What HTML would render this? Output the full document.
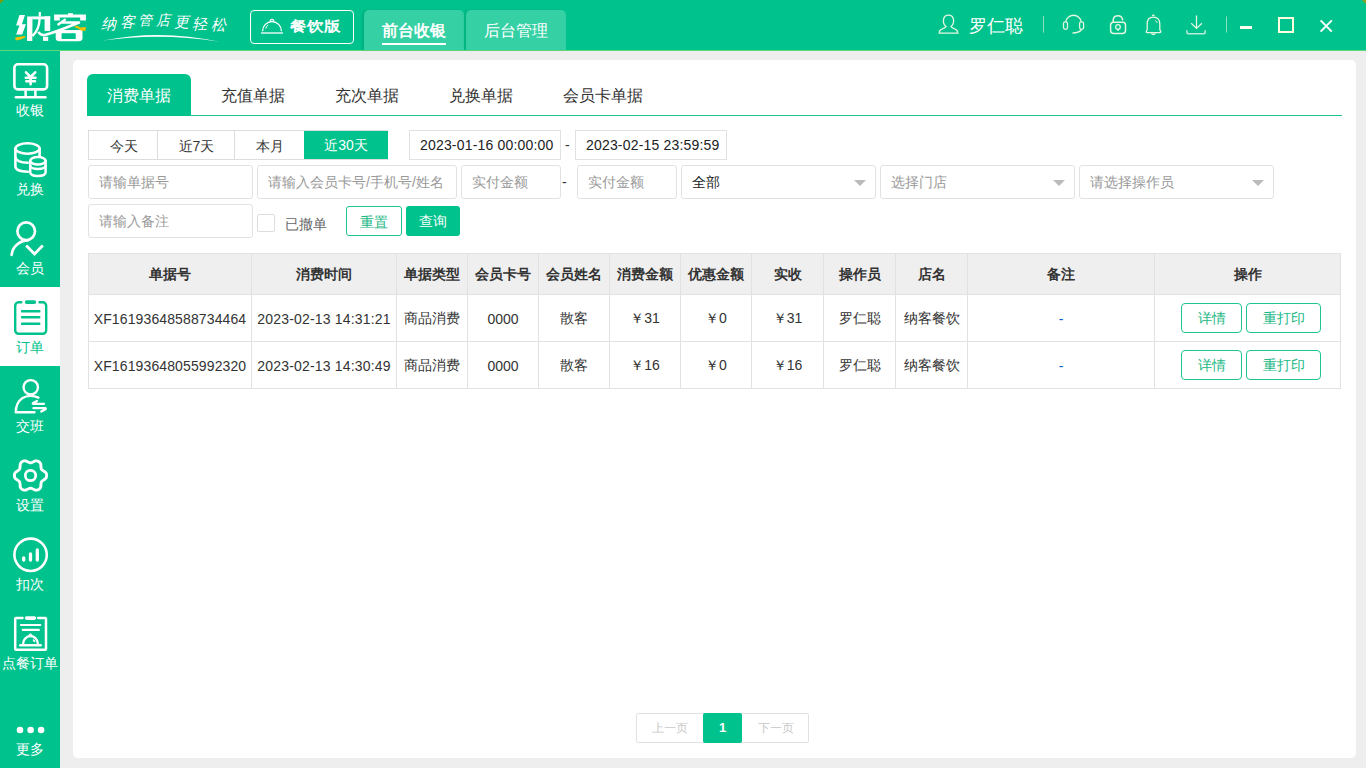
<!DOCTYPE html>
<html><head><meta charset="utf-8">
<style>
*{margin:0;padding:0;box-sizing:border-box}
html,body{width:1366px;height:768px;overflow:hidden;background:#eeeeee;font-family:"Liberation Sans",sans-serif;color:#333}
.a{position:absolute}
.t{position:absolute;white-space:nowrap;line-height:1}
#hdr{left:0;top:0;width:1366px;height:50px;background:#00c28c}
#hline{left:0;top:50px;width:1366px;height:1px;background:#5fd87a}
#side{left:0;top:51px;width:60px;height:717px;background:#00c28c}
#act{left:0;top:287px;width:60px;height:79px;background:#fff}
.sl{position:absolute;left:0;width:60px;text-align:center;font-size:14px;line-height:14px;color:#fff;white-space:nowrap}
.slg{color:#fff;font-style:italic;font-weight:300}
#card{left:73px;top:60px;width:1283px;height:698px;background:#fff;border-radius:5px}
.htab{position:absolute;top:10px;height:40px;width:100px;background:#35d1a4;box-shadow:-2px 0 2px rgba(0,60,40,0.12);border-radius:5px 5px 0 0;color:#fff;font-size:16px;text-align:center;line-height:42px}
.stab{position:absolute;top:74px;height:42px;font-size:16px;color:#333;line-height:44px;text-align:center}
.inp{position:absolute;border:1px solid #e2e2e2;border-radius:3px;background:#fff;font-size:14px;color:#999;line-height:32px;padding-left:10px;white-space:nowrap}
.sel .arr{position:absolute;right:9px;top:14px;width:0;height:0;border-left:6px solid transparent;border-right:6px solid transparent;border-top:6px solid #bbb}
.dbtn{position:absolute;top:130px;height:30px;font-size:14px;color:#333;text-align:center;line-height:30px;border-top:1px solid #ddd;border-bottom:1px solid #ddd}
table{position:absolute;left:88px;top:253px;border-collapse:collapse;table-layout:fixed}
td,th{border:1px solid #e2e2e2;text-align:center;font-size:14px;white-space:nowrap;overflow:hidden}
th{background:#efefef;height:41px;font-weight:bold;color:#333}
td{height:47px;color:#333;padding-top:2px}
td.op{padding-top:0}
th{padding-top:2px}
.obtn{display:inline-block;height:30px;line-height:28px;border:1px solid #1fc493;border-radius:4px;color:#1bb886;font-size:14px;text-align:center;vertical-align:middle}
</style></head><body>
<div id="hdr" class="a"></div>
<div id="hline" class="a"></div>
<div id="side" class="a"></div>
<div id="act" class="a"></div>
<div id="card" class="a"></div>

<!-- header -->
<svg class="a" style="left:0;top:0" width="1366" height="6"><path d="M0 0 H3.8 L0 3.8 Z" fill="#7c9a05"/><path d="M1362 0 H1366 V4 Z" fill="#8aa020"/></svg>
<svg class="a" style="left:0;top:0" width="95" height="50">
 <g fill="#fff">
  <path d="M19.5 15 H25 L21.9 24.2 H26 L22.1 34.5 H16.1 L19.5 25.6 H16.1 Z"/>
  <path d="M27.2 16.4 H32.5 L32.3 40.9 H27 Z"/>
  <path d="M32.3 16.4 H50.2 V19.3 H32.3 Z"/>
  <path d="M38.7 12 H40.9 V16.5 H38.7 Z"/>
  <path d="M44.6 16.4 H50.2 V30.9 H44.6 Z"/>
  <path d="M43 36.8 H48.2 V40.9 H43 Z"/>
  <path d="M54.1 14.5 H85.9 V20.4 H80.2 V17.5 H59.8 V20.4 H54.1 Z"/>
  <path d="M68 13.2 H73 V15 H68 Z"/>
  <path d="M55.7 30 H82.5 V38.3 Q82.5 41.3 78.5 41.3 H59.7 Q55.7 41.3 55.7 38.3 Z M61.6 33.2 V39.1 H75.7 V33.2 Z" fill-rule="evenodd"/>
 </g>
 <g fill="none" stroke="#fff" stroke-linecap="butt" stroke-linejoin="round">
  <path d="M39.6 19 Q39.2 30 32.4 36" stroke-width="2.4"/>
  <path d="M38.2 32 Q41 35.6 45 35 Q56 32 79 22.5 H62" stroke-width="2.6"/>
  <path d="M57.6 25 L65.7 19.1" stroke-width="2.4"/>
 </g>
 <path fill="#f8be00" d="M15.1 37.5 L21.4 36.6 L24.9 36.1 L25.4 37.3 L21.4 39.2 L15.8 40.6 Z"/>
 <path fill="#f8be00" d="M73.8 26.8 L77 25.7 L80.6 27.5 L85.9 27 L85.5 30.7 L81.6 30.7 L77.9 28.6 Z"/>
</svg>
<div class="t slg" style="left:101px;top:16px;font-size:15px">纳</div><div class="t slg" style="left:119.5px;top:13.5px;font-size:15px">客</div><div class="t slg" style="left:138px;top:12.5px;font-size:14px">管</div><div class="t slg" style="left:156px;top:12.5px;font-size:14px">店</div><div class="t slg" style="left:174px;top:13.5px;font-size:15px">更</div><div class="t slg" style="left:192px;top:16px;font-size:15px">轻</div><div class="t slg" style="left:210.5px;top:17px;font-size:15px">松</div>
<svg class="a" style="left:0;top:0" width="1366" height="50">
 <path d="M103 40.6 Q 160 28.6 219.5 41.8 Q 160 32.4 103 40.6 Z" fill="#fff"/>
</svg>
<div class="a" style="left:250px;top:10px;width:104px;height:34px;border:1px solid #fff;border-radius:4px"></div>
<svg class="a" style="left:0;top:0" width="300" height="50" fill="none" stroke="#fff" stroke-width="1.3">
 <path d="M262.6 31.2 A 9.4 9.6 0 0 1 281.4 31.2"/>
 <path d="M270.2 21.8 Q 270.2 19.4 272 19.4 Q 273.8 19.4 273.8 21.8"/>
 <path d="M261 33 H283"/>
 <path d="M265.8 28.6 Q 266.2 26.2 268.2 24.8" stroke-width="1"/>
</svg>
<div class="t" style="left:290px;top:18px;font-size:17px;font-weight:bold;color:#fff;transform:scaleY(0.85);transform-origin:0 0;margin-top:1px">餐饮版</div>
<div class="htab" style="left:364px;font-weight:bold">前台收银</div>
<div class="a" style="left:382px;top:43px;width:64px;height:2px;background:#fff"></div>
<div class="htab" style="left:466px">后台管理</div>

<svg class="a" style="left:0;top:0" width="1366" height="50" fill="none" stroke="#e3f7e0" stroke-width="1.3">
 <!-- user -->
 <path d="M946 26.5 C 942 23 942.5 15.2 948.5 15.2 C 954.5 15.2 955 23 951 26.5 C 951.5 28 954 28.5 955 29 C 957.5 30 957.8 32 957.8 33.2 H939.2 C 939.2 32 939.5 30 942 29 C 943 28.5 945.5 28 946 26.5 Z"/>
 <!-- separator -->
 <path d="M1043.5 16 V32.7" stroke="#8fe0c0" stroke-width="1"/>
 <!-- headset -->
 <path d="M1065.6 22 A 8 8 0 0 1 1081.4 22"/>
 <rect x="1063.5" y="21.8" width="4" height="7.6" rx="1.8"/>
 <rect x="1079.6" y="21.8" width="4" height="7.6" rx="1.8"/>
 <path d="M1081.5 29.5 Q 1079 33 1072.5 33" stroke-width="1.5"/>
 <!-- lock -->
 <path d="M1113.2 22 V19.5 A 4.8 4.8 0 0 1 1122.6 19.5 V20.6" stroke-width="1.5"/>
 <rect x="1110.6" y="22.2" width="14.9" height="11.2" rx="2.8" stroke-width="1.5"/>
 <circle cx="1118" cy="27" r="2.3" stroke-width="1.3"/>
 <path d="M1118 29.3 V31" stroke-width="1.3"/>
 <!-- bell -->
 <path d="M1153.3 17.2 C 1149 17.2 1147.2 20.5 1147.2 24 V29.5 L1146.3 31.5 C1146 32.2 1146.5 32.6 1147.2 32.6 H1159.8 C1160.5 32.6 1161 32.2 1160.7 31.5 L1159.8 29.5 V24 C 1159.8 20.5 1158 17.2 1153.3 17.2 Z"/>
 <path d="M1152 15.8 L1153.3 14.9 L1154.6 15.8" stroke-width="1.2"/>
 <path d="M1151.6 32.8 A1.8 1.8 0 0 0 1155.2 32.8"/>
 <path d="M1155.4 20.4 L1157.4 22.9" stroke-width="1"/>
 <!-- download -->
 <path d="M1196.5 15.5 V28.4 M1191.2 23.3 L1196.5 28.4 L1201.9 23.3" stroke-width="1.3"/>
 <path d="M1186.9 30.3 V32 Q1186.9 33.8 1188.7 33.8 H1203.4 Q1205.2 33.8 1205.2 32 V30.3" stroke="#b9ecd6" stroke-width="1.5"/>
 <!-- separator -->
 <path d="M1226.5 16.4 V32.5" stroke="#8fe0c0" stroke-width="1"/>
</svg>
<div class="t" style="left:969px;top:17px;font-size:18px;color:#fff">罗仁聪</div>
<div class="a" style="left:1240px;top:26px;width:12px;height:3px;background:#fdfdf0"></div>
<div class="a" style="left:1278px;top:17px;width:16px;height:16px;border:2.5px solid #fdfde0"></div>
<svg class="a" style="left:1318px;top:18px" width="16" height="16" viewBox="0 0 16 16"><path d="M2.6 2.4 L13.8 13.6 M13.8 2.4 L2.6 13.6" stroke="#fff" stroke-width="2"/></svg>

<!-- sidebar icons -->
<svg class="a" style="left:0;top:0" width="60" height="768" fill="none" stroke="#fff" stroke-width="2.6" stroke-linecap="round" stroke-linejoin="round">
 <!-- 收银 -->
 <rect x="14.4" y="64.3" width="32.7" height="25.1" rx="3.5"/>
 <path d="M25.6 90.5 V96 M35.4 90.5 V96" stroke-width="2.5" stroke-linecap="butt"/>
 <path d="M15.8 97.2 H45.5" stroke-width="2.4"/>
 <path d="M26 72.3 L30.6 77 L35.2 72.3 M25.8 77.8 H35.4 M26.3 81.2 H35 M30.6 77.2 V84.2" stroke-width="2.6"/>
 <!-- 兑换 -->
 <ellipse cx="27.5" cy="148.5" rx="12.1" ry="5.2" stroke-width="2.6"/>
 <path d="M15.4 148.5 V166.3 Q15.4 171.5 27.8 171.8" stroke-width="2.6"/>
 <path d="M15.4 157.5 Q16.5 162.5 27.8 162.8" stroke-width="2.6"/>
 <path d="M39.6 148.5 V156.5" stroke-width="2.6"/>
 <ellipse cx="37.9" cy="160.8" rx="7.7" ry="3.7" stroke-width="2.5"/>
 <path d="M30.2 160.8 V172.3 Q30.2 176 37.9 176 Q45.6 176 45.6 172.3 V160.8" stroke-width="2.5"/>
 <path d="M30.2 165.8 Q31 169 37.9 169 Q44.8 169 45.6 165.8" stroke-width="2.5"/>
 <!-- 会员 -->
 <circle cx="26.2" cy="231.2" r="8.8" stroke-width="2.7"/>
 <path d="M28 240.3 A 16.5 16.5 0 0 0 11.6 254.8" stroke-width="2.7"/>
 <path d="M26.2 245.5 L34.5 254 L42.8 245.5" stroke-width="2.8" stroke-linecap="butt" stroke-linejoin="miter"/>
 <!-- 交班 -->
 <circle cx="30.75" cy="387.3" r="7.2" stroke-width="2.4"/>
 <path d="M38.4 397.6 C 34 395.4 27 395 22.2 398.3 C 18 401.3 15.8 406 15.8 412.3 H34.5" stroke-width="2.4"/>
 <path d="M37 401 L33 403 Q32.2 403.8 33.6 403.8 H44" stroke-width="2.2"/>
 <path d="M33.4 408.2 H45.5 Q46.3 408.6 45.5 409.2 L41.2 411.5" stroke-width="2.2"/>
 <!-- 设置 -->
 <path d="M46.65 475.50 L46.62 476.06 L46.53 476.62 L46.37 477.17 L46.15 477.70 L45.86 478.21 L45.48 478.68 L44.96 479.11 L44.25 479.44 L43.83 479.83 L43.36 480.18 L42.89 480.51 L42.44 480.82 L42.04 481.13 L41.71 481.46 L41.46 481.82 L41.27 482.23 L41.15 482.68 L41.08 483.18 L41.03 483.73 L40.99 484.30 L40.92 484.88 L40.79 485.44 L40.85 486.22 L40.75 486.88 L40.52 487.45 L40.23 487.95 L39.88 488.41 L39.48 488.82 L39.05 489.18 L38.58 489.49 L38.07 489.74 L37.54 489.94 L36.99 490.08 L36.42 490.15 L35.83 490.15 L35.23 490.07 L34.61 489.83 L33.96 489.38 L33.41 489.21 L32.88 488.98 L32.36 488.73 L31.87 488.50 L31.40 488.31 L30.94 488.19 L30.50 488.15 L30.06 488.19 L29.60 488.31 L29.13 488.50 L28.64 488.73 L28.12 488.98 L27.59 489.21 L27.04 489.38 L26.39 489.83 L25.77 490.07 L25.17 490.15 L24.58 490.15 L24.01 490.08 L23.46 489.94 L22.93 489.74 L22.43 489.49 L21.95 489.18 L21.52 488.82 L21.12 488.41 L20.77 487.95 L20.48 487.45 L20.25 486.88 L20.15 486.22 L20.21 485.44 L20.08 484.88 L20.01 484.30 L19.97 483.73 L19.92 483.18 L19.85 482.68 L19.73 482.23 L19.54 481.82 L19.29 481.46 L18.96 481.13 L18.56 480.82 L18.11 480.51 L17.64 480.18 L17.17 479.83 L16.75 479.44 L16.04 479.11 L15.52 478.68 L15.14 478.21 L14.85 477.70 L14.63 477.17 L14.47 476.62 L14.38 476.06 L14.35 475.50 L14.38 474.94 L14.47 474.38 L14.63 473.83 L14.85 473.30 L15.14 472.79 L15.52 472.32 L16.04 471.89 L16.75 471.56 L17.17 471.17 L17.64 470.82 L18.11 470.49 L18.56 470.18 L18.96 469.87 L19.29 469.54 L19.54 469.18 L19.73 468.77 L19.85 468.32 L19.92 467.82 L19.97 467.27 L20.01 466.70 L20.08 466.12 L20.21 465.56 L20.15 464.78 L20.25 464.12 L20.48 463.55 L20.77 463.05 L21.12 462.59 L21.52 462.18 L21.95 461.82 L22.42 461.51 L22.93 461.26 L23.46 461.06 L24.01 460.92 L24.58 460.85 L25.17 460.85 L25.77 460.93 L26.39 461.17 L27.04 461.62 L27.59 461.79 L28.12 462.02 L28.64 462.27 L29.13 462.50 L29.60 462.69 L30.06 462.81 L30.50 462.85 L30.94 462.81 L31.40 462.69 L31.87 462.50 L32.36 462.27 L32.88 462.02 L33.41 461.79 L33.96 461.62 L34.61 461.17 L35.23 460.93 L35.83 460.85 L36.42 460.85 L36.99 460.92 L37.54 461.06 L38.07 461.26 L38.58 461.51 L39.05 461.82 L39.48 462.18 L39.88 462.59 L40.23 463.05 L40.52 463.55 L40.75 464.12 L40.85 464.78 L40.79 465.56 L40.92 466.12 L40.99 466.70 L41.03 467.27 L41.08 467.82 L41.15 468.32 L41.27 468.77 L41.46 469.18 L41.71 469.54 L42.04 469.87 L42.44 470.18 L42.89 470.49 L43.36 470.82 L43.83 471.17 L44.25 471.56 L44.96 471.89 L45.48 472.32 L45.86 472.79 L46.15 473.30 L46.37 473.83 L46.53 474.38 L46.62 474.94Z" stroke-width="2.9"/>
 <circle cx="30.5" cy="475.5" r="5.2" stroke-width="2.7"/>
 <!-- 扣次 -->
 <circle cx="30.6" cy="554.8" r="16.2" stroke-width="2.6"/>
 <path d="M23.7 557.8 V560 M30.5 554 V560 M37.3 550 V560" stroke-width="3.3"/>
 <!-- 点餐订单 -->
 <path d="M22.5 618 H16 Q15.2 618 15.2 618.8 V649 Q15.2 649.8 16 649.8 H45.2 Q46 649.8 46 649 V618.8 Q46 618 45.2 618 H38.2" stroke-width="2.5"/>
 <path d="M26.6 618.1 H34.4" stroke-width="3.6"/>
 <path d="M21 625 H40.3 M22.8 629.9 H38.8" stroke-width="2.2"/>
 <path d="M23.2 643.5 A 7.3 7.3 0 0 1 37.8 643.5" stroke-width="2.3"/>
 <path d="M20.3 645.3 H40.7" stroke-width="2.4"/>
 <path d="M29.3 635.7 L30.5 634.3 L31.7 635.7" stroke-width="1.8"/>
 <path d="M33.5 640 L34.6 641.4" stroke-width="1.6"/>
 <!-- 更多 -->
 <circle cx="20" cy="730" r="3.3" fill="#fff" stroke="none"/>
 <circle cx="30.6" cy="730" r="3.3" fill="#fff" stroke="none"/>
 <circle cx="41.1" cy="730" r="3.3" fill="#fff" stroke="none"/>
</svg>
<svg class="a" style="left:0;top:0" width="60" height="768" fill="none" stroke="#00c28c" stroke-linecap="round" stroke-linejoin="round">
 <path d="M21.3 302.3 H18.5 A3.4 3.4 0 0 0 15.2 305.7 V330.5 A3.4 3.4 0 0 0 18.6 333.8 H42.8 A3.4 3.4 0 0 0 46.2 330.5 V305.7 A3.4 3.4 0 0 0 42.8 302.3 H39.5" stroke-width="2.4"/>
 <path d="M26.7 302.1 H34.3" stroke-width="3.7"/>
 <path d="M22 311.2 H39.3 M22 317.2 H39.3 M22 323.8 H39.3" stroke-width="2.4"/>
</svg>
<div class="sl" style="top:103px">收银</div>
<div class="sl" style="top:182px">兑换</div>
<div class="sl" style="top:261px">会员</div>
<div class="sl" style="top:340px;color:#00c28c">订单</div>
<div class="sl" style="top:419px">交班</div>
<div class="sl" style="top:498px">设置</div>
<div class="sl" style="top:577px">扣次</div>
<div class="sl" style="top:656px">点餐订单</div>
<div class="sl" style="top:742px">更多</div>

<!-- sub tabs -->
<div class="a" style="left:87px;top:115px;width:1255px;height:1px;background:#1fc493"></div>
<div class="a" style="left:87px;top:74px;width:104px;height:42px;background:#00c28c;border-radius:6px 6px 0 0"></div>
<div class="stab" style="left:87px;width:104px;color:#fff">消费单据</div>
<div class="stab" style="left:205px;width:96px">充值单据</div>
<div class="stab" style="left:319px;width:96px">充次单据</div>
<div class="stab" style="left:433px;width:96px">兑换单据</div>
<div class="stab" style="left:555px;width:96px">会员卡单据</div>

<!-- date row -->
<div class="a" style="left:88px;top:130px;width:300px;height:30px;border:1px solid #ddd;border-right:none"></div>
<div class="dbtn" style="left:88px;width:70px;border-left:1px solid #ddd">今天</div>
<div class="dbtn" style="left:157px;width:78px;border-left:1px solid #ddd">近7天</div>
<div class="dbtn" style="left:234px;width:70px;border-left:1px solid #ddd">本月</div>
<div class="dbtn" style="left:304px;top:131px;height:28px;width:84px;background:#00c28c;color:#fff;border:none;line-height:28px">近30天</div>
<div class="inp" style="left:409px;top:130px;width:152px;height:30px;color:#222;line-height:28px;padding-left:10px;letter-spacing:0.18px;border-radius:0">2023-01-16 00:00:00</div>
<div class="t" style="left:565px;top:138px;font-size:14px;color:#333">-</div>
<div class="inp" style="left:575px;top:130px;width:152px;height:30px;color:#222;line-height:28px;padding-left:10px;letter-spacing:0.18px;border-radius:0">2023-02-15 23:59:59</div>

<!-- filter row -->
<div class="inp" style="left:88px;top:165px;width:165px;height:34px">请输单据号</div>
<div class="inp" style="left:257px;top:165px;width:200px;height:34px">请输入会员卡号/手机号/姓名</div>
<div class="inp" style="left:461px;top:165px;width:100px;height:34px">实付金额</div>
<div class="t" style="left:562px;top:175px;font-size:14px;color:#333">-</div>
<div class="inp" style="left:577px;top:165px;width:100px;height:34px">实付金额</div>
<div class="inp sel" style="left:681px;top:165px;width:195px;height:34px;color:#222">全部<span class="arr"></span></div>
<div class="inp sel" style="left:880px;top:165px;width:195px;height:34px">选择门店<span class="arr"></span></div>
<div class="inp sel" style="left:1079px;top:165px;width:195px;height:34px">请选择操作员<span class="arr"></span></div>

<!-- row 3 -->
<div class="inp" style="left:88px;top:204px;width:165px;height:34px">请输入备注</div>
<div class="a" style="left:257px;top:214px;width:18px;height:18px;border:1px solid #ddd;border-radius:2px"></div>
<div class="t" style="left:285px;top:217px;font-size:14px;color:#666">已撤单</div>
<div class="a" style="left:346px;top:206px;width:56px;height:30px;border:1px solid #1fc493;border-radius:3px;color:#1bb886;font-size:14px;text-align:center;line-height:30px">重置</div>
<div class="a" style="left:406px;top:206px;width:54px;height:30px;background:#00c28c;border-radius:3px;color:#fff;font-size:14px;text-align:center;line-height:30px">查询</div>

<!-- table -->
<table>
<colgroup><col style="width:163px"><col style="width:145px"><col style="width:71px"><col style="width:71px"><col style="width:71px"><col style="width:71px"><col style="width:71px"><col style="width:72px"><col style="width:72px"><col style="width:72px"><col style="width:187px"><col style="width:186px"></colgroup>
<tr><th>单据号</th><th>消费时间</th><th>单据类型</th><th>会员卡号</th><th>会员姓名</th><th>消费金额</th><th>优惠金额</th><th>实收</th><th>操作员</th><th>店名</th><th>备注</th><th>操作</th></tr>
<tr><td style="letter-spacing:0.12px">XF16193648588734464</td><td style="letter-spacing:0.18px">2023-02-13 14:31:21</td><td>商品消费</td><td>0000</td><td>散客</td><td>￥31</td><td>￥0</td><td>￥31</td><td>罗仁聪</td><td>纳客餐饮</td><td style="color:#0d62d2">-</td><td class="op"><span class="obtn" style="width:61px;margin-left:7px">详情</span><span class="obtn" style="width:75px;margin-left:4px">重打印</span></td></tr>
<tr><td style="letter-spacing:0.12px">XF16193648055992320</td><td style="letter-spacing:0.18px">2023-02-13 14:30:49</td><td>商品消费</td><td>0000</td><td>散客</td><td>￥16</td><td>￥0</td><td>￥16</td><td>罗仁聪</td><td>纳客餐饮</td><td style="color:#0d62d2">-</td><td class="op"><span class="obtn" style="width:61px;margin-left:7px">详情</span><span class="obtn" style="width:75px;margin-left:4px">重打印</span></td></tr>
</table>

<!-- pagination -->
<div class="a" style="left:636px;top:713px;width:173px;height:30px;border:1px solid #e2e2e2;border-radius:2px"></div>
<div class="t" style="left:636px;top:722px;width:67px;text-align:center;font-size:12px;color:#c8c8c8">上一页</div>
<div class="a" style="left:703px;top:713px;width:39px;height:30px;background:#00c28c;border-radius:2px;color:#fff;font-size:13px;font-weight:bold;text-align:center;line-height:30px">1</div>
<div class="t" style="left:742px;top:722px;width:67px;text-align:center;font-size:12px;color:#c8c8c8">下一页</div>


</body></html>
